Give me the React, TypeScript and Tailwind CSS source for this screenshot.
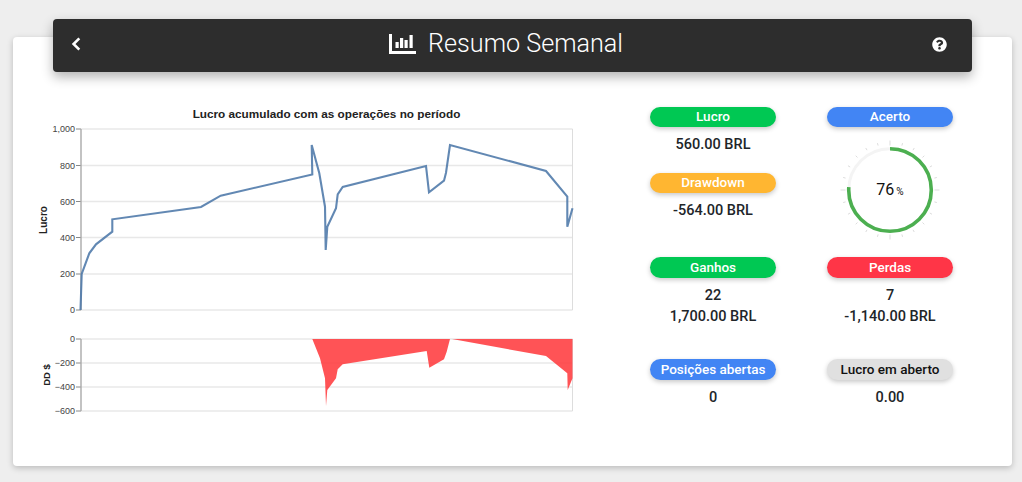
import { FaQuestionCircle } from "react-icons/fa";

const line = "80.5,310 81.7,274 89.3,253.3 96,244.3 112.3,231.7 112.3,219.3 201,207 220.7,195.7 312.3,174.5 311.7,145 319.3,173.3 325,206.7 325.7,250 327.3,226.7 336,208.3 337.7,194.3 342.7,187 426,166 429,192.3 444,180.7 446,172.7 450,145 546,171 567.3,196.7 567.3,226.7 572.5,208.3";
const area = "312.3,339 320,358.3 325,378.3 326,406 327.3,390 336,378.3 337.7,369.3 342.7,364.3 426.7,351 429.3,367.7 444,359.3 446.7,351.7 450,339 452,339 546,356 567.3,373.3 567.7,390 572.5,378.3 572.5,339";

function Chart() {
  const top = [[129, "1,000"], [165.5, "800"], [201.5, "600"], [237.5, "400"], [274, "200"], [310, "0"]] as const;
  const bot = [[339, "0"], [363, "−200"], [387, "−400"], [411, "−600"]] as const;
  return (
    <svg width={550} height={320} viewBox="30 100 550 320" className="block shrink-0" style={{ fontFamily: "'Liberation Sans', Arial, sans-serif" }}>
      <text x={326.5} y={118} textAnchor="middle" fontSize={11.75} fontWeight={700} fill="#222">Lucro acumulado com as operações no período</text>
      {top.map(([y, l]) => (
        <g key={l}>
          <line x1={81} x2={572.5} y1={y} y2={y} stroke="#e8e8e8" strokeWidth={1.4} />
          <line x1={76} x2={81} y1={y} y2={y} stroke="#888" />
          <text x={75} y={y + 3.2} textAnchor="end" fontSize={9} fill="#444">{l}</text>
        </g>
      ))}
      <line x1={572.5} x2={572.5} y1={129} y2={310} stroke="#ddd" />
      <line x1={81} x2={81} y1={129} y2={310} stroke="#aaa" strokeWidth={1.4} />
      <polyline points={line} fill="none" stroke="#4c78a8" strokeWidth={2.1} opacity={0.88} />
      <text transform="translate(47 220) rotate(-90)" textAnchor="middle" fontSize={10} fontWeight={700} fill="#222">Lucro</text>

      {bot.map(([y, l]) => (
        <g key={l}>
          <line x1={81} x2={572.5} y1={y} y2={y} stroke="#e8e8e8" strokeWidth={1.4} />
          <line x1={76} x2={81} y1={y} y2={y} stroke="#888" />
          <text x={75} y={y + 3.2} textAnchor="end" fontSize={9} fill="#444">{l}</text>
        </g>
      ))}
      <line x1={572.5} x2={572.5} y1={339} y2={411} stroke="#ddd" />
      <line x1={81} x2={81} y1={339} y2={411} stroke="#aaa" strokeWidth={1.4} />
      <polygon points={area} fill="#ff3b3f" opacity={0.88} />
      <text transform="translate(49.5 375) rotate(-90)" textAnchor="middle" fontSize={9.5} fontWeight={700} fill="#222">DD $</text>
    </svg>
  );
}

function Gauge() {
  const r = 41.3;
  const c = 2 * Math.PI * r;
  const ticks = Array.from({ length: 24 }, (_, i) => i);
  return (
    <div className="relative mx-auto mt-[11px] h-[104px] w-[104px]">
      <svg width={104} height={104} viewBox="-52 -52 104 104" className="block">
        {ticks.map((i) => {
          const a = (i * 15 * Math.PI) / 180;
          const big = i % 6 === 0;
          const r1 = big ? 44.5 : 46;
          const r2 = big ? 49.5 : 48.5;
          return (
            <line key={i} x1={Math.sin(a) * r1} y1={-Math.cos(a) * r1} x2={Math.sin(a) * r2} y2={-Math.cos(a) * r2} stroke="#dddddd" strokeWidth={1} />
          );
        })}
        <circle r={r} fill="none" stroke="#f4f4f4" strokeWidth={3} />
        <circle r={r} fill="none" stroke="#4caf50" strokeWidth={3.6} strokeDasharray={`${c * 0.76} ${c}`} transform="rotate(-90)" />
      </svg>
      <div className="absolute inset-0 flex items-center justify-center font-['Roboto',sans-serif] text-[#111]">
        <span className="text-[16px]">76</span>
        <span className="ml-[2px] mt-[2px] text-[10px]">%</span>
      </div>
    </div>
  );
}

function Pill({ label, bg, dark, tall }: { label: string; bg: string; dark?: boolean; tall?: boolean }) {
  return (
    <div className={`flex w-[126px] items-center justify-center rounded-full text-[13.5px] font-medium leading-none shadow-[0_2px_5px_rgba(0,0,0,0.22)] ${tall ? "h-[21px]" : "h-[20px] pb-[1px]"} ${bg} ${dark ? "text-[#111]" : "text-white"}`}>
      {label}
    </div>
  );
}

function Value({ children }: { children: string }) {
  return <div className="w-[126px] text-center text-[14.5px] font-medium leading-[21px] text-[#212529]">{children}</div>;
}

export default function App() {
  return (
    <div className="h-[482px] w-[1022px] overflow-hidden bg-[#eeeeee] pt-[19px] font-['Roboto',sans-serif]">
      <header className="relative z-10 ml-[53px] flex h-[53px] w-[919px] items-center rounded-[4px] bg-[#2d2d2d] pb-[3px] pl-[18px] pr-[25px] text-white shadow-[0_5px_12px_rgba(0,0,0,0.3)]">
        <svg width={10} height={14} viewBox="0 0 10 14" className="block" fill="none" stroke="white" strokeWidth={2.6}>
          <polyline points="8.3,1.3 2.6,7 8.3,12.7" />
        </svg>
        <div className="ml-[308px] flex items-center">
          <svg width={27} height={20} viewBox="0 0 27 20" className="block" fill="white">
            <rect x={0} y={0} width={3} height={20} />
            <rect x={0} y={17} width={27} height={3} />
            <rect x={6.5} y={8} width={3.2} height={6} />
            <rect x={11} y={4} width={3.2} height={10} />
            <rect x={15.5} y={6} width={3.2} height={8} />
            <rect x={20.5} y={1} width={3.2} height={13} />
          </svg>
          <span className="ml-[12px] text-[25.2px] font-light leading-none">Resumo Semanal</span>
        </div>
        <FaQuestionCircle className="ml-auto h-[15px] w-[15px]" />
      </header>

      <main className="mx-[13px] -mt-[35px] flex h-[429px] w-[999px] rounded-[4px] bg-white pl-[17px] shadow-[0_2px_6px_rgba(0,0,0,0.22)]">
        <div className="pt-[63px]">
          <Chart />
        </div>
        <div className="ml-[70px] grid grid-cols-[126px_126px] grid-rows-[150px_102px_auto] gap-x-[51px] pt-[70px]">
          <div className="flex flex-col">
            <Pill label="Lucro" bg="bg-[#00c853]" />
            <div className="mt-[7px]"><Value>560.00 BRL</Value></div>
            <div className="mt-[18px]"><Pill label="Drawdown" bg="bg-[#ffb631]" /></div>
            <div className="mt-[7px]"><Value>-564.00 BRL</Value></div>
          </div>
          <div className="flex flex-col">
            <Pill label="Acerto" bg="bg-[#4285f4]" />
            <Gauge />
          </div>
          <div className="flex flex-col">
            <Pill label="Ganhos" bg="bg-[#00c853]" tall />
            <div className="mt-[7px]"><Value>22</Value><Value>1,700.00 BRL</Value></div>
          </div>
          <div className="flex flex-col">
            <Pill label="Perdas" bg="bg-[#ff3547]" tall />
            <div className="mt-[7px]"><Value>7</Value><Value>-1,140.00 BRL</Value></div>
          </div>
          <div className="flex flex-col">
            <Pill label="Posições abertas" bg="bg-[#4285f4]" tall />
            <div className="mt-[7px]"><Value>0</Value></div>
          </div>
          <div className="flex flex-col">
            <Pill label="Lucro em aberto" bg="bg-[#e0e0e0]" dark tall />
            <div className="mt-[7px]"><Value>0.00</Value></div>
          </div>
        </div>
      </main>
    </div>
  );
}
